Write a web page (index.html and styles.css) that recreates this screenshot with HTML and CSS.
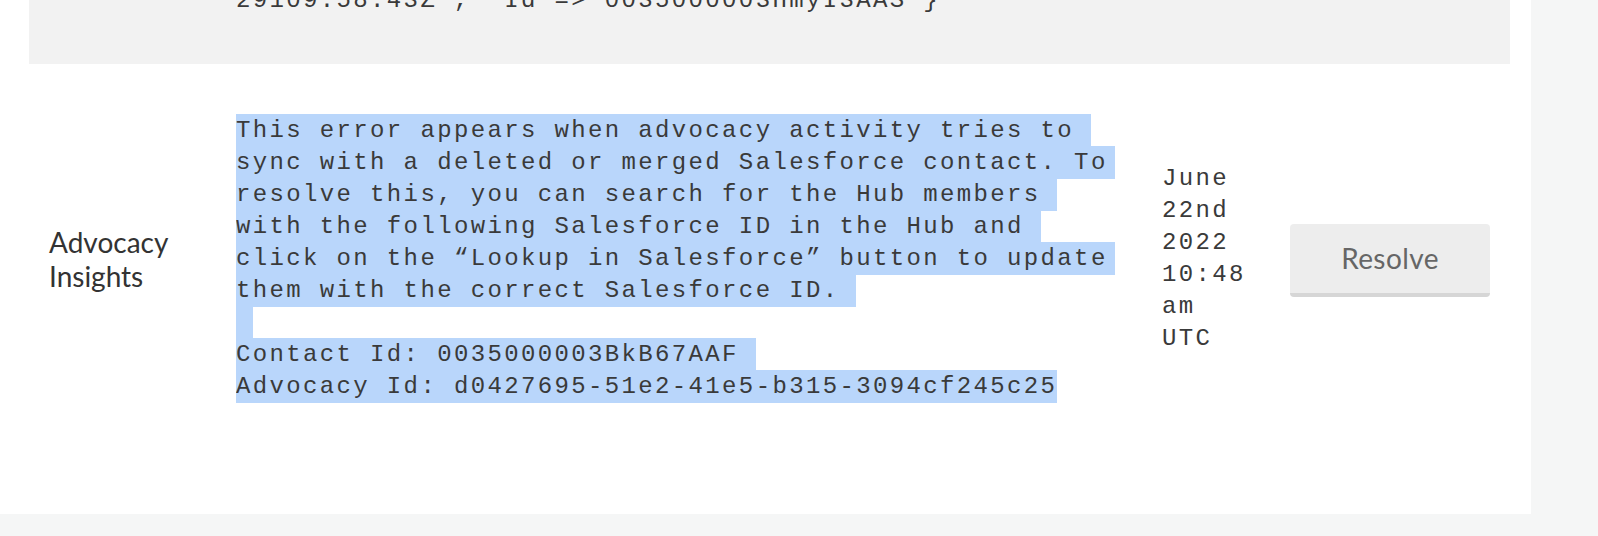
FILE: index.html
```html
<!DOCTYPE html>
<html lang="en">
<head>
<meta charset="utf-8">
<title>Sync errors</title>
<link rel="stylesheet" href="styles.css">
</head>
<body>
<div class="card">
  <div class="row row--muted">
    <div class="cell-label"></div>
    <div class="cell-msg"><span class="mono">29109:58:43Z", "Id"=>"0035000003HmyI3AAS"}</span></div>
    <div class="cell-date"></div>
    <div class="cell-action"></div>
  </div>
  <div class="row">
    <div class="cell-label">Advocacy Insights</div>
    <div class="cell-msg"><span class="sel">This error appears when advocacy activity tries to sync with a deleted or merged Salesforce contact. To resolve this, you can search for the Hub members with the following Salesforce ID in the Hub and click on the “Lookup in Salesforce” button to update them with the correct Salesforce ID. 
 
Contact Id: 0035000003BkB67AAF 
Advocacy Id: d0427695-51e2-41e5-b315-3094cf245c25</span></div>
    <div class="cell-date">June 22nd 2022 10:48 am UTC</div>
    <div class="cell-action"><button class="btn" type="button">Resolve</button></div>
  </div>
</div>
</body>
</html>
```
FILE: styles.css
```css
html, body {
  margin: 0;
  padding: 0;
}
body {
  background: #f5f6f6;
  height: 536px;
  overflow: hidden;
  font-family: "Lato", "Open Sans", sans-serif;
  color: #333;
}
.card {
  width: 1481px;
  margin-top: -64px;
  padding: 0 21px 62px 29px;
  background: #ffffff;
}
.row {
  display: grid;
  grid-template-columns: 187px 879px 1fr 200px;
  align-items: center;
  padding: 51px 20px 49px;
}
.row--muted {
  background: #f2f2f2;
  padding-top: 49px;
  padding-bottom: 47px;
}
.cell-label {
  font-size: 28px;
  line-height: 34px;
  color: #333;
}
.cell-msg,
.cell-date {
  font-family: "Liberation Mono", "Courier New", monospace;
  font-size: 24px;
  letter-spacing: 2.36px;
  line-height: 32px;
  color: #3a3a3a;
}
.cell-msg {
  white-space: pre-wrap;
  overflow-x: clip;
}
.sel {
  background: #b9d6fb;
  padding: 3px 0;
}
.cell-date {
  padding-left: 47px;
  width: 90px;
}
.cell-action {
  display: flex;
  justify-content: flex-end;
}
.btn {
  width: 200px;
  height: 73px;
  margin-top: 2px;
  border: 0;
  border-bottom: 4px solid #d6d6d6;
  border-radius: 4px;
  background: #ededed;
  font-family: "Lato", "Open Sans", sans-serif;
  font-size: 28px;
  letter-spacing: 0.4px;
  color: #666;
  padding: 0;
}
```
